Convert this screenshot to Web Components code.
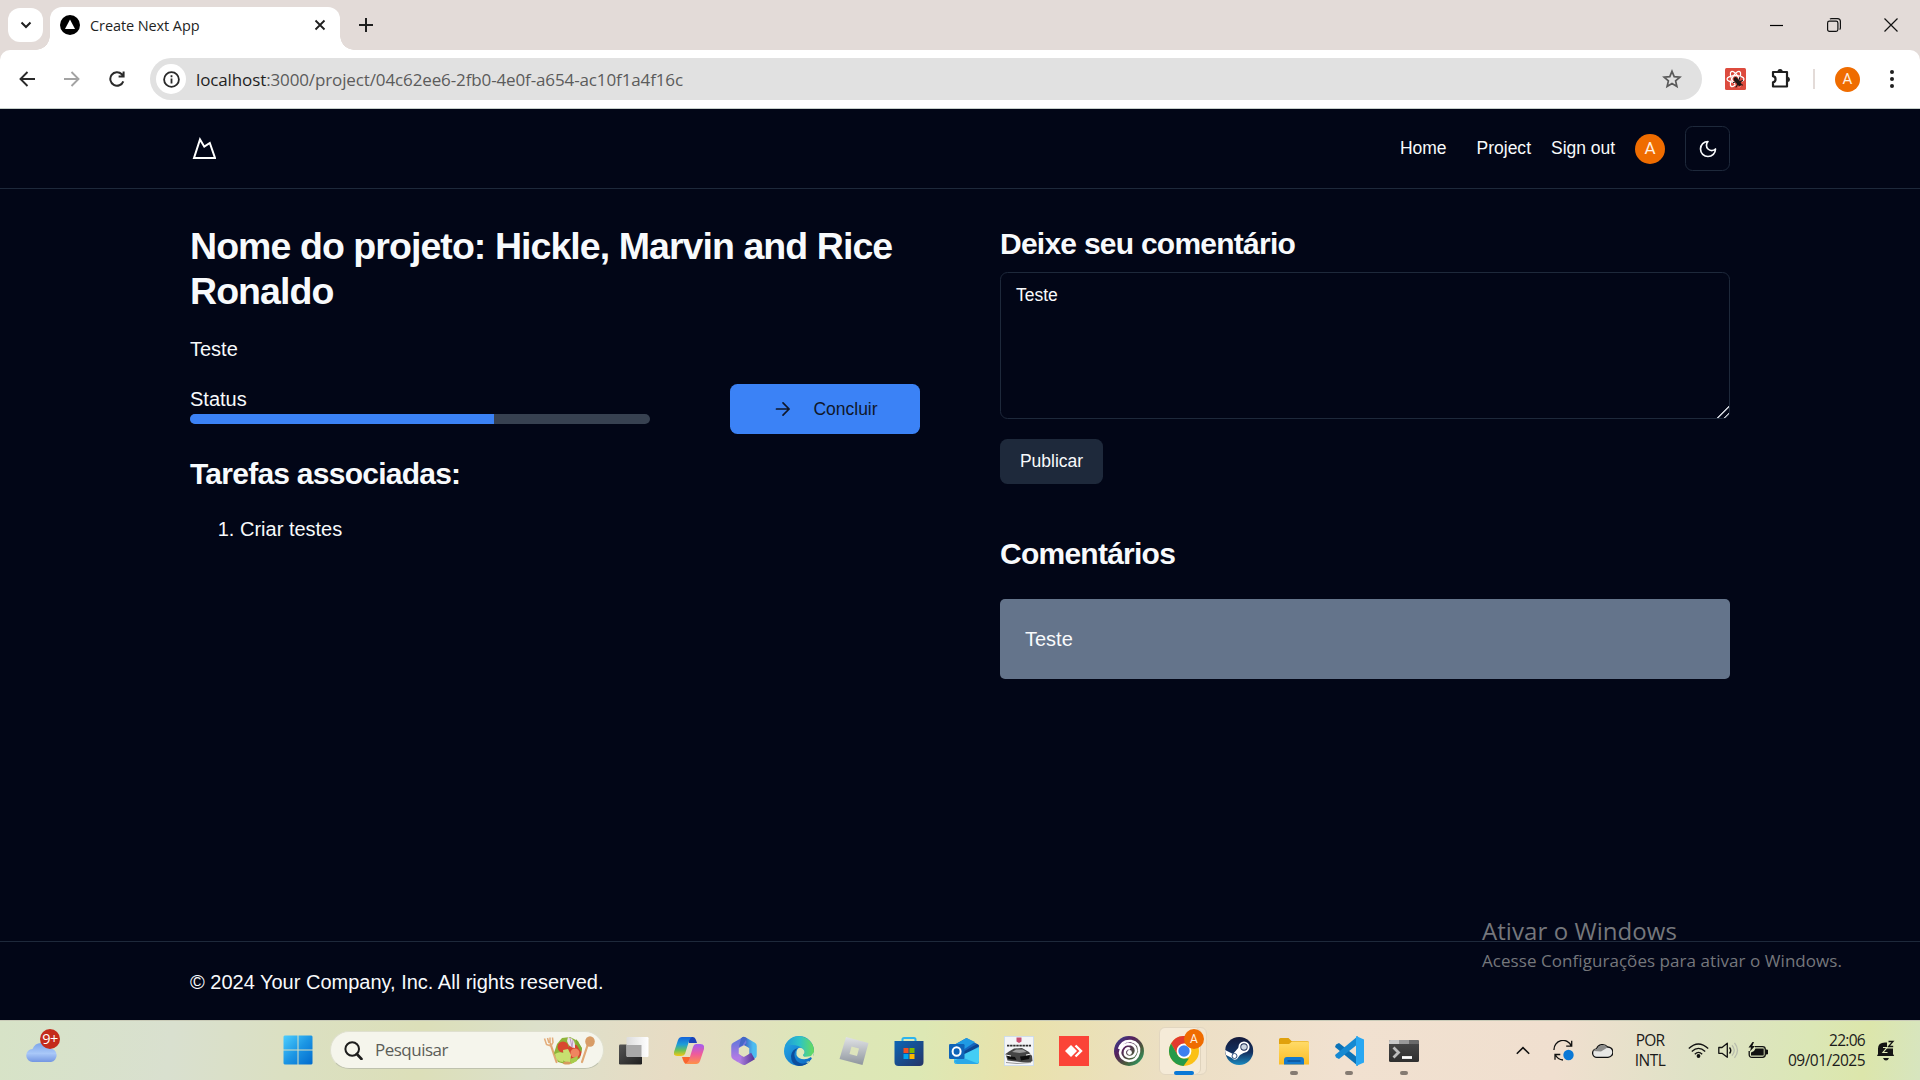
<!DOCTYPE html>
<html lang="pt-BR">
<head>
<meta charset="utf-8">
<title>Create Next App</title>
<style>
html,body{margin:0;height:100%;overflow:hidden;background:#020617}
body{font-family:"Liberation Sans",Arial,sans-serif}
</style>
</head>
<body>
<desktop-screen></desktop-screen>
<script>
const UI = '"Open Sans","Noto Sans",sans-serif';
function define(name, css, html, after) {
  const t = document.createElement('template');
  t.innerHTML = '<style>:host{display:block;box-sizing:border-box}*{box-sizing:border-box}' + css + '</style>' + html;
  customElements.define(name, class extends HTMLElement {
    connectedCallback() {
      if (this.shadowRoot) return;
      this.attachShadow({mode: 'open'}).appendChild(t.content.cloneNode(true));
      if (after) after.call(this, this.shadowRoot);
    }
  });
}

/* Label whose tracking is tuned so that it spans the width given in "w". */
define('fit-text', ':host{display:inline-block;white-space:nowrap}', '<slot></slot>', function () {
  const w = +this.getAttribute('w');
  if (!w) return;
  const n = this.textContent.length;
  this.style.letterSpacing = '0px';
  const now = this.getBoundingClientRect().width;
  if (now) this.style.letterSpacing = ((w - now) / n).toFixed(3) + 'px';
});

const ICONS = {
  chevdown: [12, 12, '<path d="M1.5 3.5 6 8l4.500-4.500" fill="none" stroke="#1f1f1f" stroke-width="2"/>'],
  favicon: [20, 20, '<circle cx="10" cy="10" r="10" fill="#000"/><path d="M10 4.500 15 14H5z" fill="#fff"/>'],
  close: [12, 12, '<path d="M1.500 1.500l9 9M10.500 1.500l-9 9" stroke="#1f1f1f" stroke-width="1.800"/>'],
  plus: [14, 14, '<path d="M7 0v14M0 7h14" stroke="#1f1f1f" stroke-width="2"/>'],
  min: [14, 14, '<path d="M0 7.500h13" stroke="#000" stroke-width="1.200"/>'],
  restore: [14, 14, '<rect x=".6" y="3.100" width="10.300" height="10.300" rx="1.800" fill="none" stroke="#111" stroke-width="1.200"/><path d="M3 1.200Q3.500.6 4.500.6h6q2.900 0 2.900 2.900v6.500q0 1-.8 1.500" fill="none" stroke="#111" stroke-width="1.200"/>'],
  wclose: [14, 14, '<path d="M.5.5l13 13M13.500.5l-13 13" stroke="#111" stroke-width="1.200"/>'],
  back: [16, 16, '<path d="M8.500 1 1.500 8l7 7M1.500 8H16" fill="none" stroke="#2a2a2a" stroke-width="1.900"/>'],
  fwd: [16, 16, '<path d="M7.500 1l7 7-7 7M14.500 8H0" fill="none" stroke="#a3a3a3" stroke-width="1.900"/>'],
  reload: [16, 16, '<path d="M14.300 10.300A6.700 6.700 0 1 1 12.800 3.300L14.500 5.200M14.600.6v5H9.600" fill="none" stroke="#2a2a2a" stroke-width="2"/>'],
  info: [17, 17, '<circle cx="8.500" cy="8.500" r="7.400" fill="none" stroke="#2a2a2a" stroke-width="1.800"/><path d="M8.500 7.500v5M8.500 4.300v1.900" stroke="#2a2a2a" stroke-width="1.800"/>'],
  star: [20, 20, '<path d="M10 2.300l2.200 5.300 5.700.5-4.300 3.800 1.300 5.600-4.900-3-4.900 3 1.300-5.600L2.100 8.100l5.700-.5z" fill="none" stroke="#5a5a5a" stroke-width="1.700"/>'],
  ext: [21, 22, '<rect width="21" height="22" rx="1.500" fill="#dd4b3e"/><g fill="none" stroke="#fff" stroke-width="1.200"><ellipse cx="10.500" cy="11" rx="8.500" ry="3.400"/><ellipse cx="10.500" cy="11" rx="8.500" ry="3.400" transform="rotate(60 10.500 11)"/><ellipse cx="10.500" cy="11" rx="8.500" ry="3.400" transform="rotate(-60 10.500 11)"/></g><path d="M10 14l6-3 2 5-3 3-4 0z" fill="#dd4b3e"/><g stroke="#1d1716" stroke-linecap="round"><path d="M10.500 11l4 5" stroke-width="3.800"/><path d="M8.500 14.500l3-1M11 19l2-3M17.500 12.500l-3 1.500M15 9l-1 3M17.500 17l-2-.5" stroke-width="1.100"/></g>'],
  puzzle: [22, 22, '<path d="M3 4h14v14.500H3V14.300a3.100 3.100 0 0 0 0-6.100z" fill="none" stroke="#1f1f1f" stroke-width="2.200" stroke-linejoin="round"/><path d="M7.500 3.500a2.600 2.600 0 0 1 5.200 0zM18 8.800a2.700 2.700 0 0 1 0 5.200z" fill="#1f1f1f"/>'],
  dots: [6, 20, '<g fill="#1f1f1f"><circle cx="3" cy="3" r="2"/><circle cx="3" cy="10" r="2"/><circle cx="3" cy="17" r="2"/></g>'],
  logo: [24, 24, '<path d="M2 21 8 2.500 12.300 9.700 17.800 6 23 21z" fill="none" stroke="#fff" stroke-width="2" stroke-linejoin="miter"/>'],
  moon: [20, 20, '<path transform="scale(.8333)" d="M12 3a6 6 0 0 0 9 9 9 9 0 1 1-9-9Z" fill="none" stroke="#f8fafc" stroke-width="2" stroke-linejoin="round"/>'],
  arrow: [16, 16, '<path d="M1.500 8h12.600M8 1.900 14.100 8 8 14.100" fill="none" stroke="#0f172a" stroke-width="1.700" stroke-linecap="round" stroke-linejoin="round"/>'],
  weather: [32, 22, '<defs><linearGradient id="g" x1="0" y1="0" x2="0" y2="1"><stop offset="0" stop-color="#7ba4ea"/><stop offset=".55" stop-color="#a9c8f8"/><stop offset="1" stop-color="#7396e2"/></linearGradient></defs><path d="M7 22a6.500 6.500 0 0 1-.5-13A9.500 9.500 0 0 1 24 8.500 6.800 6.800 0 0 1 25 22z" fill="url(#g)"/>'],
  start: [30, 30, '<defs><linearGradient id="g" gradientUnits="userSpaceOnUse" x1="0" y1="0" x2="30" y2="30"><stop offset="0" stop-color="#4fd0ff"/><stop offset=".5" stop-color="#1c96e4"/><stop offset="1" stop-color="#0069cc"/></linearGradient></defs><path d="M1.500.5H14.500V14.500H.5V1.500zM15.500.5H28.500L29.500 1.500V14.500H15.500zM.5 15.500H14.500V29.500H1.500L.5 28.500zM15.500 15.500H29.500V28.500L28.500 29.500H15.500z" fill="url(#g)"/>'],
  search: [19, 19, '<circle cx="8.200" cy="8" r="6.800" fill="none" stroke="#1c1c1c" stroke-width="2"/><path d="M12.800 13 17.500 18" stroke="#1c1c1c" stroke-width="2.600" stroke-linecap="round"/>'],
  salad: [52, 30, '<g stroke="#e0a873" stroke-linecap="round"><path d="M7.500 9l6 18" stroke-width="2.200"/><path d="M45 9l-6 18" stroke-width="2.200"/></g><path d="M1.500 3.500 3.500 9.500 8 11 10 7.500 9.500 2.500M4.500 3l1.500 5M7 2.500V8" fill="none" stroke="#e3ad7b" stroke-width="1.500" stroke-linejoin="round"/><ellipse cx="47" cy="6.500" rx="4.800" ry="5.200" fill="#d89c66"/><path d="M11 18l3-9 5-6 8-1 8 4 4 8-2 9-7 5-8 1-7-2z" fill="#8fb53a"/><circle cx="20" cy="12" r="5.500" fill="#d84830"/><circle cx="31" cy="17" r="7.500" fill="#d44630"/><circle cx="32" cy="18" r="4.500" fill="#ef8560"/><path d="M25 2q8 2 7 11-6 0-8-7z" fill="#ece2ee"/><path d="M27 3l2 9M30 5l-1 7" stroke="#b48abb" stroke-width=".8"/><path d="M12 19q6-4 11 1l-3 7q-7 0-8-8M20 15l5-1 3 6-1 9-6-3z" fill="#c8e070"/><path d="M33 4l6 9-1 4-5-8z" fill="#7fab33"/><path d="M27 24l8-3-1 5-6 3z" fill="#a9cc4c"/><ellipse cx="24" cy="28" rx="4" ry="1.600" fill="#d69b5f"/>'],
  taskview: [30, 30, '<defs><linearGradient id="a" x1="0" y1="0" x2="1" y2="1"><stop offset="0" stop-color="#555"/><stop offset="1" stop-color="#1f1f1f"/></linearGradient><linearGradient id="b"><stop offset="0" stop-color="#dcdcdc"/><stop offset="1" stop-color="#fff"/></linearGradient></defs><rect x="0" y="8.500" width="23" height="20" rx="1.200" fill="url(#a)"/><rect x="7.500" y="1" width="22" height="20" rx="1.200" fill="url(#b)"/><path d="M7.500 9H22.500V21H8.500L7.500 20z" fill="#a9a9a9"/>'],
  copilot: [30, 30, '<defs><linearGradient id="a" x1="0" y1="0" x2="0" y2="1"><stop offset="0" stop-color="#1463db"/><stop offset=".4" stop-color="#1e9ed6"/><stop offset=".7" stop-color="#6ac158"/><stop offset="1" stop-color="#f5c713"/></linearGradient><linearGradient id="b" x1="0" y1="0" x2="0" y2="1"><stop offset="0" stop-color="#a35cf2"/><stop offset=".5" stop-color="#ef5b9c"/><stop offset="1" stop-color="#ff9147"/></linearGradient></defs><path d="M14 1h5q2 0 3 3l1 3h-8z" fill="#1941b8"/><path d="M8 1h10q-2 1-3 4l-4 13q-1 2-4 2H3q-4 0-3-4L4 4q1-3 4-3z" fill="url(#a)"/><path d="M8 21q2 7 4 7l4-3 2-4z" fill="#f9652e"/><path d="M22 8h4q5 0 4 5l-4 12q-1 3-4 3H11q3-1 4-4l4-13q1-3 3-3z" fill="url(#b)"/>'],
  m365: [30, 30, '<defs><linearGradient id="a" x1="0" y1="0" x2="0" y2="1"><stop offset="0" stop-color="#6a78dc"/><stop offset="1" stop-color="#b07ae4"/></linearGradient><linearGradient id="b"><stop offset="0" stop-color="#3a5cc0"/><stop offset="1" stop-color="#4cbcf0"/></linearGradient><linearGradient id="c"><stop offset="0" stop-color="#b889e8"/><stop offset="1" stop-color="#5d3b9c"/></linearGradient></defs><g fill="none" stroke-width="7.500" stroke-linejoin="round" stroke-linecap="round"><path d="M15 4.800 24 10V19" stroke="url(#b)"/><path d="M24 20 15 25.200 9 22" stroke="url(#c)" stroke-linecap="butt"/><path d="M13.500 5.700 6 10v10l2.500 1.500" stroke="url(#a)"/></g><path d="M12 2.300 15 1 18 2.300 13.500 9.500 10 11z" fill="#4566c8"/><circle cx="15" cy="15" r="4.800" fill="#e1e2bf"/>'],
  edge: [30, 30, '<defs><linearGradient id="a"><stop offset="0" stop-color="#2099d8"/><stop offset=".5" stop-color="#2cc3c7"/><stop offset="1" stop-color="#68dc59"/></linearGradient><linearGradient id="b" x1="0" y1="0" x2="1" y2="1"><stop offset="0" stop-color="#26aee7"/><stop offset="1" stop-color="#0a62c2"/></linearGradient></defs><circle cx="15" cy="15" r="15" fill="url(#b)"/><path d="M1 10A15 15 0 0 1 30 15q0 6-7 6-4 0-4-2 3-3 0-6-6-6-18-3z" fill="url(#a)"/><path d="M14 12q-6 5-2 12 6 7 14 1A15 15 0 0 1 15 30Q7 29 7 20q1-7 7-8z" fill="#0d4e9d"/><path d="M13 14q-2 5 2 8 6 3 12-1l1 2-4 4-2-1 4-1h1l2-3 1-6-3 4q-8 2-8-1 3-3 0-6-4-3-6 1z" fill="#dfe9ba"/>'],
  roblox: [30, 30, '<defs><linearGradient id="a" x1="0" y1="0" x2="0" y2="1"><stop offset="0" stop-color="#e1e3e6"/><stop offset="1" stop-color="#8e959d"/></linearGradient></defs><path d="M7 1l22.500 6-6 22L.5 23z" fill="url(#a)"/><path d="M12.500 10.500l7.500 2-2 7.500-7.500-2z" fill="#dde4bc"/>'],
  store: [30, 30, '<defs><linearGradient id="a" x1="0" y1="0" x2="1" y2="1"><stop offset="0" stop-color="#0c65b5"/><stop offset="1" stop-color="#253467"/></linearGradient></defs><path d="M8.500 6V3.500Q8.500 2 10 2H20Q21.500 2 21.500 3.500V6" fill="none" stroke="#2cb4ee" stroke-width="2"/><path d="M.5 5H29.500V26q0 4-4 4h-21q-4 0-4-4z" fill="url(#a)"/><path d="M9.500 12h5v5h-5z" fill="#f25022"/><path d="M15.500 12h5v5h-5z" fill="#7fba00"/><path d="M9.500 18h5v5h-5z" fill="#00a4ef"/><path d="M15.500 18h5v5h-5z" fill="#ffb900"/>'],
  outlook: [30, 30, '<path d="M5 9L17.500 2 30 9v16q0 3-3 3H8q-3 0-3-3z" fill="#1565bd"/><path d="M5 9L17.500 2 26 6 11 16z" fill="#1f9be4"/><path d="M28 8l2 2-18 12v-5z" fill="#0b4791"/><path d="M5 23l25-12v14q0 3-3 3H8q-3 0-3-3z" fill="#44cdf4"/><path d="M12 21l18 7H8l-3-3z" fill="#2aa8e8"/><rect x="0" y="8" width="15.500" height="15" rx="1.300" fill="#0f64b8"/><ellipse cx="7.600" cy="15.500" rx="4" ry="4.300" fill="none" stroke="#fff" stroke-width="2"/>'],
  asphalt: [30, 30, '<rect x=".4" y=".4" width="29.200" height="29.200" fill="#f4f5f7" stroke="#c8d9ee" stroke-width=".8"/><path d="M12.500 1.500h5v4l-2.500 1.500-2.500-1.500z" fill="#c64d70"/><path d="M3 9.700H27" stroke="#2d2d2d" stroke-width="1.700" stroke-dasharray="2.400 .7"/><path d="M1.500 18l3.500-2.500 5-3 8-.5 7 4 3 4 .5 5-4 2-21-2.500z" fill="#454545"/><path d="M8 16l4-2.500 7 0 3.500 2.500-7 1z" fill="#9a9a9a"/><path d="M3 20l8 1 1.500 3-8-1M16 20.500l10-1-1 3.500-8 1.500z" fill="#0d0d0d"/><path d="M2 19l5 1M22 19l5-1" stroke="#f2f2f2" stroke-width="1"/><path d="M2 26.500l11 1 14-1" stroke="#999" stroke-width="1" fill="none"/>'],
  anydesk: [30, 30, '<rect width="30" height="30" fill="#fb4437"/><path d="M12 9l6 6-6 6-6-6z" fill="#fff"/><path d="M16.500 9.500 22 15l-5.500 5.500" fill="none" stroke="#fff" stroke-width="2.400"/>'],
  ubi: [30, 30, '<defs><linearGradient id="a" x1="0" y1="0" x2="1" y2="1"><stop offset="0" stop-color="#33479b"/><stop offset=".35" stop-color="#56205d"/><stop offset=".65" stop-color="#4b5a3a"/><stop offset="1" stop-color="#1db577"/></linearGradient></defs><circle cx="15" cy="15" r="15" fill="url(#a)"/><path d="M5 13Q8 4 17 5q9 2 8 11-2 9-10 9-8-1-9-8 1-8 8-9 8 0 8 7-1 6-7 6-5-1-4-6 2-4 5-2" fill="none" stroke="#fff" stroke-width="2.500"/><circle cx="15.500" cy="16.500" r="2.400" fill="#fff"/>'],
  chrome: [30, 30, '<circle cx="15" cy="15" r="15" fill="#fbc116"/><path d="M2 7.500A15 15 0 0 1 28 7.500H15L8.500 18.800z" fill="#e33b2e"/><path d="M2 7.500 8.500 18.800Q11 23 15 22.500h5L14.500 30A15 15 0 0 1 2 7.500z" fill="#249a4a"/><circle cx="15" cy="15" r="7.400" fill="#fff"/><circle cx="15" cy="15" r="5.700" fill="#3c7ff0"/>'],
  steam: [30, 30, '<defs><linearGradient id="a" x1="0" y1="0" x2="0" y2="1"><stop offset="0" stop-color="#14193a"/><stop offset=".55" stop-color="#123060"/><stop offset="1" stop-color="#1a8ac0"/></linearGradient></defs><circle cx="15.200" cy="15" r="14" fill="url(#a)"/><path d="M1 14l8 4 6-7 8 4-7 4-3 4q-3 2-5-1l-6-3z" fill="#fff"/><circle cx="20" cy="11" r="4.600" fill="#17264f" stroke="#fff" stroke-width="1.900"/><circle cx="20" cy="11" r="2.800" fill="#cdd6e2"/><circle cx="10.500" cy="20" r="2.500" fill="none" stroke="#315381" stroke-width="1"/>'],
  explorer: [30, 30, '<defs><linearGradient id="a" x1="0" y1="0" x2="0" y2="1"><stop offset="0" stop-color="#ffdb69"/><stop offset="1" stop-color="#fbbd25"/></linearGradient></defs><path d="M0 3.500Q0 2 1.500 2H9.500L12.500 5H28Q30 5 30 7V14H0z" fill="#e0a10c"/><path d="M0 8H10L13 5.500H28.500Q30 5.500 30 7V28.500H0z" fill="url(#a)"/><path d="M5 28.500V24Q5 21 8 21H22Q25 21 25 24V28.500z" fill="#1479cd"/><path d="M8.500 25H21.500" stroke="#0a4f94" stroke-width="1.400"/>'],
  vscode: [30, 30, '<path d="M2 8.500 5 7 24 22V30L1 11z" fill="#0b72b7"/><path d="M2 21.500 5 23 24 8V0L1 19z" fill="#1689d2"/><path d="M22 0l8 3.500V26.500L22 30z" fill="#29a7f2"/>'],
  term: [30, 30, '<defs><linearGradient id="a" x1="0" y1="0" x2="0" y2="1"><stop offset="0" stop-color="#4b4b4b"/><stop offset="1" stop-color="#2f2f2f"/></linearGradient></defs><rect y="4" width="30" height="22" rx="1.500" fill="url(#a)"/><path d="M0 8V5.500Q0 4 1.500 4H10V8z" fill="#c9c9c9"/><path d="M10 4H20V8H10z" fill="#999"/><path d="M20 4h8.500Q30 4 30 5.500V8H20z" fill="#6a6a6a"/><path d="M4.500 11.500 9.500 16.500l-5 5" fill="none" stroke="#bdbdbd" stroke-width="2.800"/><path d="M13 21.500H23" stroke="#fff" stroke-width="2.800"/>'],
  up: [14, 9, '<path d="M.8 7.800 7 1.600l6.200 6.200" fill="none" stroke="#111" stroke-width="1.600"/>'],
  sync: [21, 21, '<path d="M1 10A9 9 0 0 1 18.300 6M18.700.8V6.200H13.200M2 19.800V14.500h5.300M2.300 14.800A9.500 9.500 0 0 0 10 20" fill="none" stroke="#111" stroke-width="1.300"/><circle cx="15.500" cy="15" r="5.200" fill="#0a78d6"/>'],
  cloud: [21, 15, '<path d="M5 14.300a4.200 4.200 0 0 1-.4-8.400A6.300 6.300 0 0 1 15.500 4 5 5 0 0 1 16 14.300z" fill="#e8e8e6" stroke="#111" stroke-width="1.300"/><path d="M1.300 8Q2 5.800 5 6A6 6 0 0 1 15.500 4.500L9 8.500z" fill="#8c8c8a"/>'],
  wifi: [21, 15, '<g fill="none" stroke="#111" stroke-width="1.300"><path d="M.8 5.500q9.500-9 19.400 0M3.800 8.500q6.700-6.300 13.400 0M6.800 11.200q3.700-3.600 7.400 0"/></g><circle cx="10.500" cy="13" r="1.900" fill="#111"/>'],
  vol: [21, 17, '<path d="M.8 5.500H4L9.300 1.200V15.300L4 11.300H.8z" fill="none" stroke="#111" stroke-width="1.300" stroke-linejoin="round"/><path d="M11.500 5.500q2.500 3 0 6" fill="none" stroke="#111" stroke-width="1.400"/><path d="M14 3.200q4.500 5 0 10.500M16.500.8q6 7.500 0 15" fill="none" stroke="#b8bcae" stroke-width="1.300"/>'],
  bat: [21, 17, '<path d="M7 4.700H14.500Q17.300 4.700 17.300 7.500V12.500Q17.300 15.300 14.500 15.300H4Q1.200 15.300 1.200 12.500V9" fill="none" stroke="#111" stroke-width="1.300"/><path d="M18 8h1.500v4H18z" fill="#111" stroke="#111"/><path d="M7.500 6.500H15.700V13.500H3V10.500L6 9z" fill="#111"/><path d="M4.500 0 .5 5.500H3L2 9.500 7 4H4.300L6 0z" fill="#111"/>'],
  bell: [18, 21, '<path d="M1 14V8.500Q1 2.500 8 2.500h2V8.500h6V14l1.200 2H0z" fill="#141414"/><path d="M6 18h6q-1 2.500-3 2.500T6 18z" fill="#141414"/><path d="M11.500 1.500h4.500l-4.500 5h4.700" fill="none" stroke="#141414" stroke-width="1.300"/><path d="M6 7.500h4l-4 5h4.500" fill="none" stroke="#dfe8b8" stroke-width="1.200"/>']
};
customElements.define('app-icon', class extends HTMLElement {
  connectedCallback() {
    if (this.shadowRoot) return;
    const [w, h, body] = ICONS[this.getAttribute('name')];
    this.attachShadow({mode: 'open'}).innerHTML =
      `<style>:host{display:block;flex:none;width:${w}px;height:${h}px}svg{display:block}</style><svg width="${w}" height="${h}" viewBox="0 0 ${w} ${h}">${body}</svg>`;
  }
});

define('user-avatar', `:host{flex:none;width:var(--s,30px);height:var(--s,30px);border-radius:50%;background:#ef6c00;color:#fff0e0;
  display:flex;align-items:center;justify-content:center;font:var(--f,17px)/1 Roboto,sans-serif}`, '<slot></slot>');

define('tab-strip', `:host{height:50px;background:#e3dbd8;display:flex;font-family:${UI};color:#1f1f1f}
.find{width:35px;height:34px;margin:8px 0 0 8px;border-radius:12px;background:#fff;display:flex;align-items:center;justify-content:center}
.tab{position:relative;width:290px;height:43px;margin:7px 0 0 7px;padding:0 14px 7px 10px;border-radius:12px 12px 0 0;background:#fff;display:flex;align-items:center;font-size:14.500px}
.tab:before,.tab:after{content:"";position:absolute;bottom:0;width:14px;height:14px}
.tab:before{left:-14px;background:radial-gradient(circle at 0 0,transparent 13.500px,#fff 14px)}
.tab:after{right:-14px;background:radial-gradient(circle at 100% 0,transparent 13.500px,#fff 14px)}
.tab fit-text{margin-left:10px;flex:none}
.plus{margin:18px 0 0 19px}
.win{margin:18px 22px 0 auto;display:flex;gap:43px}`,
`<div class="find"><app-icon name="chevdown"></app-icon></div>
<div class="tab"><app-icon name="favicon"></app-icon><fit-text w="109.500">Create Next App</fit-text><span style="flex:1"></span><app-icon name="close"></app-icon></div>
<app-icon class="plus" name="plus"></app-icon>
<div class="win"><app-icon name="min"></app-icon><app-icon name="restore"></app-icon><app-icon name="wclose"></app-icon></div>`);

define('address-bar', `:host{height:59px;background:#e3dbd8;font-family:${UI}}
.bar{height:59px;background:#fff;border-radius:10px 10px 0 0;border-bottom:1px solid #c6cfca;display:flex;align-items:center;padding:0 25px 0 19px}
.nav{display:flex;gap:29px;align-items:center}
.box{width:1552px;height:42px;border-radius:21px;background:#e1e1e1;margin-left:25px;display:flex;align-items:center;padding:0 20px 0 6px}
.site{width:30px;height:30px;border-radius:50%;background:#fff;display:flex;align-items:center;justify-content:center;flex:none}
.url{margin-left:10px;font-size:17px;color:#5b5b5b}b{font-weight:400;color:#1f1f1f}
.sep{width:2px;height:20px;background:#e3dbd8;margin:0 20px 0 21px}`,
`<div class="bar"><div class="nav"><app-icon name="back"></app-icon><app-icon name="fwd"></app-icon><app-icon name="reload"></app-icon></div>
<div class="box"><span class="site"><app-icon name="info"></app-icon></span><fit-text class="url" w="487"><b>localhost</b>:3000/project/04c62ee6-2fb0-4e0f-a654-ac10f1a4f16c</fit-text><span style="flex:1"></span><app-icon name="star"></app-icon></div>
<app-icon name="ext" style="margin-left:23px"></app-icon><app-icon name="puzzle" style="margin-left:24px"></app-icon><span class="sep"></span>
<user-avatar style="--s:25px;--f:15px">A</user-avatar><span style="flex:1"></span><app-icon name="dots"></app-icon></div>`);

define('site-header', `:host{height:80px;border-bottom:1px solid #1e293b;padding:0 190px;display:flex;align-items:center;font-size:17.500px;line-height:25px}
nav{margin-left:auto;display:flex;align-items:center;gap:20px}
.l{margin-bottom:1px}
.theme{width:45px;height:45px;border:1px solid #1e293b;border-radius:7.500px;display:flex;align-items:center;justify-content:center}`,
`<app-icon name="logo" style="margin-left:2px"></app-icon>
<nav><fit-text class="l" w="46.500" style="margin-right:10px">Home</fit-text><fit-text class="l" w="54.500">Project</fit-text><fit-text class="l" w="64">Sign out</fit-text><user-avatar>A</user-avatar><span class="theme"><app-icon name="moon"></app-icon></span></nav>`);

define('progress-bar', `:host{height:10px;border-radius:5px;background:#374151;overflow:hidden}i{display:block;height:10px;background:#3b82f6}`,
'<i></i>', function (r) { r.querySelector('i').style.width = this.getAttribute('value') + '%'; });

define('ui-button', `:host{display:inline-flex;align-items:center;justify-content:center;height:45px;padding:0 20px;border-radius:7.500px;background:#1e293b;font-size:17.500px;line-height:25px}`, '<slot></slot>');

define('project-details', `h1,h2{margin:0;font-weight:700;letter-spacing:-.025em}h1{font-size:37.500px;line-height:45px}h2{font-size:30px;line-height:40px;margin-top:20px}
p{margin:20px 0 0}.row{display:flex;align-items:center;margin-top:20px;height:50px}
.st{width:460px;margin-top:-10px;line-height:30px}
ui-button{margin-left:auto;width:190px;height:50px;background:#3b82f6;color:#0f172a}
ol{margin:20px 0 0;padding-left:50px}`,
`<h1>Nome do projeto: Hickle, Marvin and Rice Ronaldo</h1><p>Teste</p>
<div class="row"><div class="st">Status<progress-bar value="66"></progress-bar></div>
<ui-button><app-icon name="arrow" style="margin:0 22px 0 3px"></app-icon><span>Concluir</span></ui-button></div>
<h2>Tarefas associadas:</h2><ol><li>Criar testes</li></ol>`);

define('comment-card', `:host{background:#64748b;border-radius:5px;padding:25px;height:80px}`, '<slot></slot>');

define('comment-panel', `h2{margin:0;font-weight:700;letter-spacing:-.025em;font-size:30px;line-height:40px}
textarea{display:block;width:100%;height:147px;margin:8px 0 20px;padding:10px 15px;border:1px solid #1e293b;border-radius:7.500px;background:#020617;color:inherit;font:17.500px/25px "Liberation Sans",sans-serif;resize:vertical;outline:none}
textarea::-webkit-resizer{background:linear-gradient(135deg,transparent 58%,#c4c8d0 60%,#c4c8d0 65%,transparent 67%,transparent 80%,#c4c8d0 82%,#c4c8d0 86%,transparent 88%)}
.c{margin-top:50px;margin-bottom:25px}ui-button{display:flex;width:103px;padding-bottom:1px}`,
`<h2>Deixe seu comentário</h2><textarea>Teste</textarea><ui-button>Publicar</ui-button>
<h2 class="c">Comentários</h2><comment-card>Teste</comment-card>`);

define('site-footer', `:host{height:79px;border-top:1px solid #1e293b;padding:2px 190px 0;display:flex;align-items:center}`,
`<fit-text w="413.500">© 2024 Your Company, Inc. All rights reserved.</fit-text>`);

define('web-page', `:host{height:911px;background:#020617;color:#f8fafc;font:20px/30px "Liberation Sans",Arial,sans-serif;display:flex;flex-direction:column}
main{flex:1;display:grid;grid-template-columns:730px 730px;gap:80px;padding:35px 190px 0}`,
`<site-header></site-header><main><project-details></project-details><comment-panel></comment-panel></main><site-footer></site-footer>`);

define('activation-notice', `:host{position:absolute;left:1482px;top:914px;font-family:${UI};color:#75777c}
fit-text{display:table}.a{font-size:24px;line-height:34px}.b{font-size:17px;line-height:25px}`,
`<fit-text class="a" w="195">Ativar o Windows</fit-text><fit-text class="b" w="360">Acesse Configurações para ativar o Windows.</fit-text>`);

define('task-item', `:host{position:relative;width:55px;height:60px;flex:none;display:flex;align-items:center;justify-content:center}
.box{display:none}
:host([active]) .box{display:block;position:absolute;left:3px;top:6px;width:48px;height:48px;border-radius:6px;background:#f5ebd8;border:1px solid #e2d6c0;box-shadow:inset -5px 0 #f1e5d0,inset -6px 0 #dfd3bd}
app-icon{position:relative}
.dot{display:none;position:absolute;bottom:6px;width:8px;height:4px;border-radius:2px;background:#857b72}
:host([open]) .dot,:host([active]) .dot{display:block}:host([active]) .dot{width:20px;background:#0a78d6}
slot{display:block;position:absolute;left:28px;top:8px}`,
`<span class="box"></span><span class="i"></span><slot></slot><span class="dot"></span>`, function (r) {
  const i = document.createElement('app-icon');
  i.setAttribute('name', this.getAttribute('icon'));
  r.querySelector('.i').replaceWith(i);
});

define('system-tray', `:host{display:flex;align-items:center;margin:-1px 0 0 auto;font:15.500px/20px ${UI};color:#1b1b1b}
.t{display:flex;flex-direction:column}`,
`<app-icon name="up" style="margin-right:23px"></app-icon><app-icon name="sync" style="margin-right:18px"></app-icon><app-icon name="cloud" style="margin-right:22px"></app-icon>
<div class="t" style="align-items:center;width:30px;margin-right:23px"><fit-text w="28.500">POR</fit-text><fit-text w="30.500">INTL</fit-text></div>
<app-icon name="wifi" style="margin-right:9px"></app-icon><app-icon name="vol" style="margin-right:9px"></app-icon><app-icon name="bat" style="margin-right:19px"></app-icon>
<div class="t" style="align-items:flex-end;width:77px;margin-right:12px"><fit-text w="36">22:06</fit-text><fit-text w="77">09/01/2025</fit-text></div><app-icon name="bell"></app-icon>`);

define('task-bar', `:host{height:60px;border-top:1px solid #c9cbb8;display:flex;align-items:center;padding:0 25px 0 26px;
background:linear-gradient(97deg,#d7e3c7 0,#d9e0cf 9%,#dbe0c2 15%,#dcdfb9 22%,#dce0ca 28%,#e7dcc4 35%,#dde6b9 42%,#dde8b4 48%,#e9e2ab 53%,#ecdfc4 61%,#f1e1d0 70%,#f0dfcf 81%,#dfe2c6 88%,#dbe7b6 94%,#dce6ab 97%,#d7e5bf 100%)}
.w{position:relative;width:32px;height:22px}
.n{position:absolute;left:14px;top:-11px;width:20px;height:20px;border-radius:50%;background:#c42b1c;color:#fff;font:14.500px/20px ${UI};text-align:center;letter-spacing:-.5px}
.s{width:274px;height:38px;border-radius:19px;background:#f5f5ec;border:1px solid #dfe0cf;border-bottom-color:#bfc2ae;margin:-1px 2px 0 17px;padding:0 8px 0 13px;display:flex;align-items:center;font:17px/24px ${UI};color:#5c5d58}`,
`<div class="w"><app-icon name="weather"></app-icon><span class="n">9+</span></div>
<app-icon name="start" style="margin:-1px 0 0 225px"></app-icon>
<div class="s"><app-icon name="search"></app-icon><fit-text w="73" style="margin-left:12px">Pesquisar</fit-text><span style="flex:1"></span><app-icon name="salad"></app-icon></div>
<task-item icon="taskview"></task-item><task-item icon="copilot"></task-item><task-item icon="m365"></task-item><task-item icon="edge"></task-item><task-item icon="roblox"></task-item><task-item icon="store"></task-item><task-item icon="outlook"></task-item><task-item icon="asphalt"></task-item><task-item icon="anydesk"></task-item><task-item icon="ubi"></task-item><task-item icon="chrome" active><user-avatar style="--s:20px;--f:12px">A</user-avatar></task-item><task-item icon="steam"></task-item><task-item icon="explorer" open></task-item><task-item icon="vscode" open></task-item><task-item icon="term" open></task-item>
<system-tray></system-tray>`);

define('desktop-screen', ':host{position:relative;width:1920px;height:1080px;overflow:hidden}',
'<tab-strip></tab-strip><address-bar></address-bar><web-page></web-page><activation-notice></activation-notice><task-bar></task-bar>');
</script>
</body>
</html>
